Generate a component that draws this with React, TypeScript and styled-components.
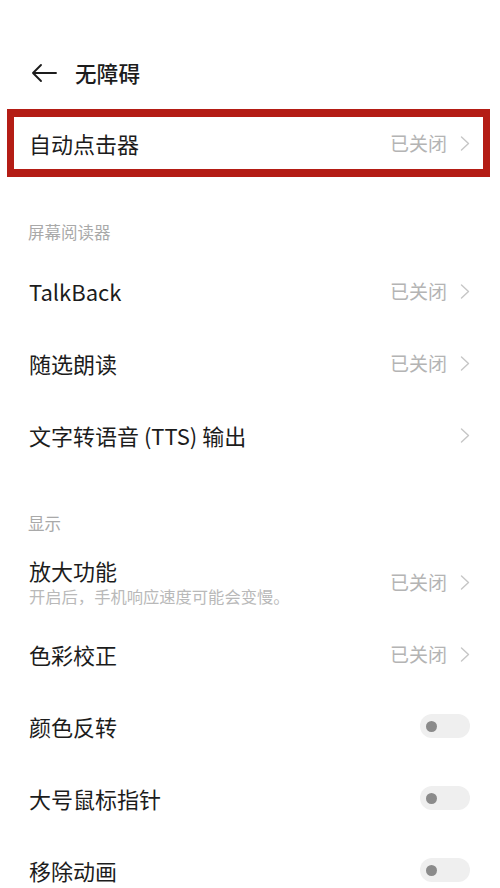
import React from "react";
import styled, { createGlobalStyle } from "styled-components";

const Global = createGlobalStyle`
  html, body { margin: 0; padding: 0; background: #ffffff; }
  body { font-family: "Noto Sans CJK SC", "Noto Sans", sans-serif; -webkit-font-smoothing: antialiased; }
`;

const Page = styled.div`
  width: 500px;
  height: 888px;
  overflow: hidden;
  background: #ffffff;
  display: flex;
  flex-direction: column;
  & > * { flex-shrink: 0; }
`;

const Header = styled.header`
  display: flex;
  align-items: center;
  gap: 18px;
  height: 30px;
  padding: 58px 0 0 31px;
  margin-bottom: 21px;
`;

const Title = styled.h1`
  margin: 0;
  font-size: 21.5px;
  font-weight: 500;
  color: #1c1c1c;
  line-height: 30px;
  letter-spacing: 0.3px;
`;

const Frame = styled.div`
  margin: 0 10px 3px 7px;
  border: 8px solid #b41d15;
  border-left-width: 7px;
  border-right-width: 7px;
`;

const SectionHeader = styled.div`
  padding: 37px 28px 8px;
  font-size: 16.5px;
  line-height: 30px;
  color: #a9a9a9;
`;

const Row = styled.div<{ $inset?: boolean }>`
  display: flex;
  align-items: center;
  justify-content: space-between;
  height: ${(p) => (p.$inset ? 52 : 72)}px;
  padding: ${(p) => (p.$inset ? "0 13px 0 15px" : "0 30px 0 29px")};
`;

const TextCol = styled.div`
  display: flex;
  flex-direction: column;
  gap: 2px;
`;

const Label = styled.span`
  font-size: 22px;
  line-height: 26px;
  color: #1c1c1c;
`;

const Sub = styled.span`
  font-size: 16.3px;
  line-height: 22px;
  color: #b9b9b9;
`;

const Trail = styled.div`
  display: flex;
  align-items: center;
  gap: 13px;
`;

const Value = styled.span`
  font-size: 19px;
  line-height: 26px;
  color: #b4b4b4;
`;

const Track = styled.div`
  width: 50px;
  height: 24px;
  border-radius: 12px;
  background: #efefef;
  display: flex;
  align-items: center;
  padding-left: 6px;
  box-sizing: border-box;
`;

const Knob = styled.div`
  width: 11px;
  height: 11px;
  border-radius: 50%;
  background: #8b8b8b;
`;

const Chevron = () => (
  <svg width="10" height="15" viewBox="0 0 10 15" fill="none">
    <path d="M1.5 1 L8.5 7.5 L1.5 14" stroke="#c6c6c6" strokeWidth="1.4" strokeLinecap="round" strokeLinejoin="round" />
  </svg>
);

const BackArrow = () => (
  <svg width="26" height="20" viewBox="0 0 26 20" fill="none">
    <path d="M25 10H2M10 2L2 10l8 8" stroke="#1c1c1c" strokeWidth="1.9" strokeLinecap="round" strokeLinejoin="round" />
  </svg>
);

type Item = { label: string; sub?: string; value?: string; kind: "link" | "toggle" };

const ItemRow: React.FC<{ item: Item; inset?: boolean }> = ({ item, inset }) => (
  <Row $inset={inset}>
    <TextCol>
      <Label>{item.label}</Label>
      {item.sub && <Sub>{item.sub}</Sub>}
    </TextCol>
    {item.kind === "link" ? (
      <Trail>
        {item.value && <Value>{item.value}</Value>}
        <Chevron />
      </Trail>
    ) : (
      <Track>
        <Knob />
      </Track>
    )}
  </Row>
);

const reader: Item[] = [
  { label: "TalkBack", value: "已关闭", kind: "link" },
  { label: "随选朗读", value: "已关闭", kind: "link" },
  { label: "文字转语音 (TTS) 输出", kind: "link" },
];

const display: Item[] = [
  { label: "放大功能", sub: "开启后，手机响应速度可能会变慢。", value: "已关闭", kind: "link" },
  { label: "色彩校正", value: "已关闭", kind: "link" },
  { label: "颜色反转", kind: "toggle" },
  { label: "大号鼠标指针", kind: "toggle" },
  { label: "移除动画", kind: "toggle" },
];

export default function App() {
  return (
    <Page>
      <Global />
      <Header>
        <BackArrow />
        <Title>无障碍</Title>
      </Header>
      <Frame>
        <ItemRow inset item={{ label: "自动点击器", value: "已关闭", kind: "link" }} />
      </Frame>
      <SectionHeader>屏幕阅读器</SectionHeader>
      {reader.map((it) => (
        <ItemRow key={it.label} item={it} />
      ))}
      <SectionHeader>显示</SectionHeader>
      {display.map((it) => (
        <ItemRow key={it.label} item={it} />
      ))}
    </Page>
  );
}
